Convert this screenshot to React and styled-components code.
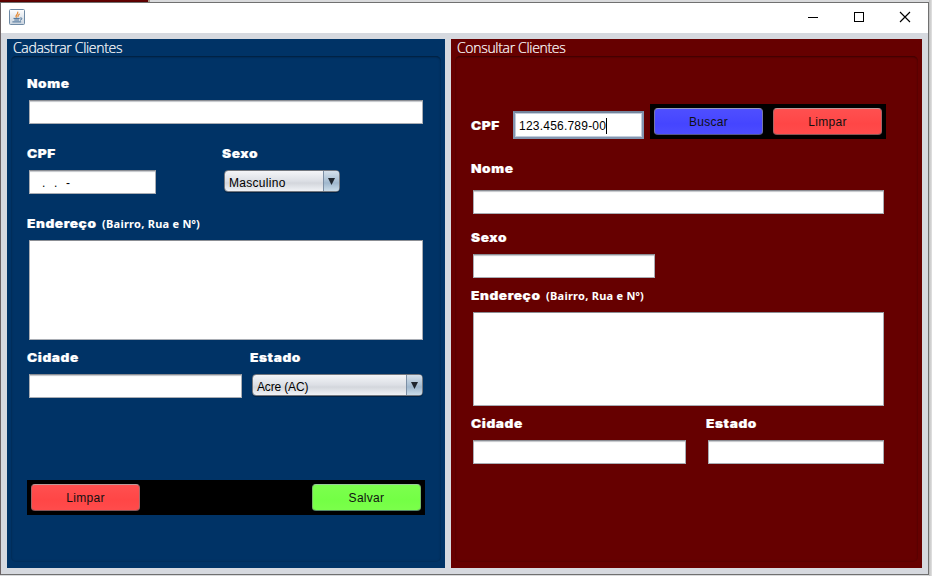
import React from "react";
import styled, { createGlobalStyle } from "styled-components";

const Global = createGlobalStyle`
  * { box-sizing: border-box; }
  body { margin: 0; overflow: hidden; background: #dcdcdc; }
`;

const Desktop = styled.div`
  width: 932px;
  height: 576px;
  padding-top: 2px;
  background:
    linear-gradient(#600, #500) 0 0 / 148px 2px no-repeat,
    linear-gradient(#a98, #a98) 148px 0 / 2px 2px no-repeat,
    linear-gradient(90deg, #bdbdbd, #e2e2e2) 929px 0 / 3px 576px no-repeat,
    #d9dadc;
`;

const Window = styled.div`
  width: 929px;
  height: 573px;
  display: flex;
  flex-direction: column;
  border: 1px solid #707070;
  border-left-color: #6b6264;
  background: #d6d9df;
`;

const TitleBar = styled.header`
  height: 30px;
  flex: none;
  display: flex;
  align-items: center;
  justify-content: space-between;
  padding: 0 17px 2px 8px;
  background: #fff;
`;

const Controls = styled.div`
  display: flex;
  gap: 30px;
  svg { display: block; }
`;

const Panels = styled.main`
  display: flex;
  gap: 6px;
  padding: 6px;
`;

const Panel = styled.section`
  width: ${(p) => p.$width}px;
  height: 529px;
  padding: 0 4px 6px;
  background: ${(p) => p.$color};
`;

const PanelTitle = styled.h2`
  margin: 0;
  padding-left: 2px;
  height: 17px;
  font: 300 14px/18px "Open Sans", sans-serif;
  letter-spacing: -0.32px;
  -webkit-text-stroke: 0.2px #fff;
  white-space: nowrap;
  color: #fff;
`;

const Group = styled.div`
  height: 506px;
  padding: ${(p) => p.$top}px 16px 0;
  border-radius: 5px;
  box-shadow: inset 0 2px 2px -1px rgba(0, 0, 0, 0.35), inset 0 0 2px 1px rgba(0, 0, 0, 0.13);
`;

const Row = styled.div`
  display: flex;
  align-items: flex-start;
  margin-bottom: ${(p) => p.$after || 0}px;
`;

const Cell = styled.div`
  width: ${(p) => (p.$width ? p.$width + "px" : "auto")};
`;

const LabelLine = styled.div`
  display: flex;
  align-items: baseline;
  height: 20px;
  margin-top: ${(p) => p.$drop || 0}px;
  margin-bottom: ${(p) => p.$gap ?? 6}px;
  white-space: nowrap;
  color: #fff;
`;

const LabelText = styled.label`
  display: inline-block;
  font: 900 12px/19px Inter, sans-serif;
  letter-spacing: 0.5px;
  -webkit-text-stroke: 0.2px #fff;
  transform: scaleX(1.14);
  transform-origin: left;
`;

const Hint = styled.span`
  margin-left: 14px;
  font: 700 11px/19px "Noto Sans", sans-serif;
  letter-spacing: 0.25px;
`;

const Field = styled.div`
  width: ${(p) => p.$width}px;
  height: ${(p) => p.$height || 24}px;
  margin-left: 2px;
  padding: 2px 0 0 12px;
  border: 1px solid #a9adb4;
  border-top-color: #8b8e94;
  background: #fff;
  box-shadow: ${(p) => (p.$height ? "none" : "inset 0 2px 1px -1px #c4c6ca")};
  font: 12px/20px "Liberation Sans", sans-serif;
  white-space: pre;
  color: #000;
`;

const MaskChar = styled.span`
  display: inline-block;
  width: 12px;
`;

const FocusedField = styled.div`
  display: flex;
  align-items: center;
  width: 131px;
  height: 28px;
  margin-top: 7px;
  padding: 2px 0 0 4px;
  border: 2px solid #8296b0;
  border-top-color: #73849c;
  background: #fff;
  box-shadow: inset 0 0 0 1px #c3cddb;
  font: 12px/20px "Liberation Sans", sans-serif;
  letter-spacing: 0.22px;
  color: #000;
`;

const Caret = styled.span`
  width: 1px;
  height: 16px;
  background: #000;
`;

const Combo = styled.div`
  display: flex;
  width: ${(p) => p.$width}px;
  height: 22px;
  margin: 1px 0 0 2px;
  border: 1px solid #74787f;
  border-radius: 4px;
  overflow: hidden;
  background: linear-gradient(#f4f5f8, #dcdfe5 50%, #d3d6dc 60%, #f0f2f6);
  box-shadow: 0 1px 0 rgba(0, 0, 0, 0.3);
  font: 12px/22px "Liberation Sans", sans-serif;
  color: #000;
`;

const ComboText = styled.span`
  flex: 1;
  padding: 1px 0 0 4px;
  letter-spacing: ${(p) => p.$spacing || 0}px;
`;

const ComboArrow = styled.span`
  display: grid;
  place-items: center;
  width: 16px;
  border-left: 1px solid #7c8fa5;
  background: linear-gradient(#d5e0eb, #a9bfd3 50%, #9fb7cd 60%, #cbddea);
`;

const ButtonBar = styled.div`
  display: flex;
  justify-content: space-between;
  width: ${(p) => p.$width}px;
  height: 35px;
  margin-left: ${(p) => p.$offset || 0}px;
  padding: 4px;
  background: #000;
`;

const Button = styled.button`
  width: 109px;
  height: 27px;
  padding: 0;
  border: 1px solid;
  border-color: ${(p) => p.$edge};
  border-radius: 4px;
  background: ${(p) => p.$fill};
  font: 12px/24px "Liberation Sans", sans-serif;
  letter-spacing: 0.3px;
  color: #111;
`;

const red = { $fill: "linear-gradient(#ff5050, #ff4646 60%, #ff4c4c)", $edge: "#b99 #a66 #855" };
const green = { $fill: "linear-gradient(#7cff4e, #74ff45 60%, #7bff4b)", $edge: "#9c9 #7b6 #586" };
const blue = { $fill: "linear-gradient(#4f4fff, #4545ff 60%, #4c4cff)", $edge: "#99b #77a #558" };

function JavaIcon() {
  return (
    <svg width="16" height="16" viewBox="0 0 16 16" fill="none">
      <defs>
        <linearGradient id="tile" x1="0" y1="0" x2="0" y2="1">
          <stop offset="0" stopColor="#fff" />
          <stop offset="1" stopColor="#c9d3de" />
        </linearGradient>
      </defs>
      <rect x=".5" y=".5" width="15" height="15" rx="1" fill="url(#tile)" stroke="#6f8aa5" />
      <path d="M7.6 8.6C5.2 6.6 10.2 5 8.6 2.7M9.2 8.2C8 6.8 9.8 6.2 10.6 4.8" stroke="#e58a35" strokeWidth="1.2" />
      <path d="M4.5 9.4h6.2M5.3 11h4.8M11.2 9c2.4-.7 2 1.9-.2 2.2M3.4 12.9h8.7" stroke="#486f96" strokeWidth="1" />
    </svg>
  );
}

function Label({ children, hint, drop, gap }) {
  return (
    <LabelLine $drop={drop} $gap={gap}>
      <LabelText>{children}</LabelText>
      {hint && <Hint>{hint}</Hint>}
    </LabelLine>
  );
}

function Select({ width, text, spacing }) {
  return (
    <Combo $width={width}>
      <ComboText $spacing={spacing}>{text}</ComboText>
      <ComboArrow>
        <svg width="7" height="7" viewBox="0 0 7 7"><path d="M0 0h7L3.5 7z" fill="#20262e" /></svg>
      </ComboArrow>
    </Combo>
  );
}

function Address({ width, height }) {
  return (
    <Cell>
      <Label hint="(Bairro, Rua e Nº)">Endereço</Label>
      <Field $width={width} $height={height} />
    </Cell>
  );
}

export default function App() {
  return (
    <Desktop>
      <Global />
      <Window>
        <TitleBar>
          <JavaIcon />
          <Controls>
            <svg width="16" height="12"><path d="M1 6.5h10" stroke="#000" /></svg>
            <svg width="12" height="12" fill="none"><rect x="1.5" y="1.5" width="9" height="9" stroke="#000" /></svg>
            <svg width="16" height="12"><path d="M5 1l10 10M15 1L5 11" stroke="#000" strokeWidth="1.15" /></svg>
          </Controls>
        </TitleBar>
        <Panels>
          <Panel $width={438} $color="#003366">
            <PanelTitle>Cadastrar Clientes</PanelTitle>
            <Group $top={18}>
              <Row $after={20}>
                <Cell><Label>Nome</Label><Field $width={394} /></Cell>
              </Row>
              <Row $after={20}>
                <Cell $width={195}>
                  <Label>CPF</Label>
                  <Field $width={127}>
                    <MaskChar>.</MaskChar><MaskChar>.</MaskChar><MaskChar>-</MaskChar>
                  </Field>
                </Cell>
                <Cell><Label>Sexo</Label><Select width={116} text="Masculino" spacing={0.3} /></Cell>
              </Row>
              <Row $after={8}><Address width={394} height={100} /></Row>
              <Row $after={82}>
                <Cell $width={223}><Label>Cidade</Label><Field $width={213} /></Cell>
                <Cell><Label>Estado</Label><Select width={171} text="Acre (AC)" spacing={-0.15} /></Cell>
              </Row>
              <ButtonBar $width={398}>
                <Button {...red}>Limpar</Button>
                <Button {...green}>Salvar</Button>
              </ButtonBar>
            </Group>
          </Panel>
          <Panel $width={471} $color="#660000">
            <PanelTitle>Consultar Clientes</PanelTitle>
            <Group $top={48}>
              <Row $after={20}>
                <Cell $width={42}><Label drop={12} gap={0}>CPF</Label></Cell>
                <FocusedField>123.456.789-00<Caret /></FocusedField>
                <ButtonBar $width={236} $offset={6}>
                  <Button {...blue}>Buscar</Button>
                  <Button {...red}>Limpar</Button>
                </ButtonBar>
              </Row>
              <Row $after={14}>
                <Cell><Label gap={11}>Nome</Label><Field $width={411} /></Cell>
              </Row>
              <Row $after={8}>
                <Cell><Label>Sexo</Label><Field $width={182} /></Cell>
              </Row>
              <Row $after={8}><Address width={411} height={94} /></Row>
              <Row>
                <Cell $width={235}><Label>Cidade</Label><Field $width={213} /></Cell>
                <Cell><Label>Estado</Label><Field $width={176} /></Cell>
              </Row>
            </Group>
          </Panel>
        </Panels>
      </Window>
    </Desktop>
  );
}
